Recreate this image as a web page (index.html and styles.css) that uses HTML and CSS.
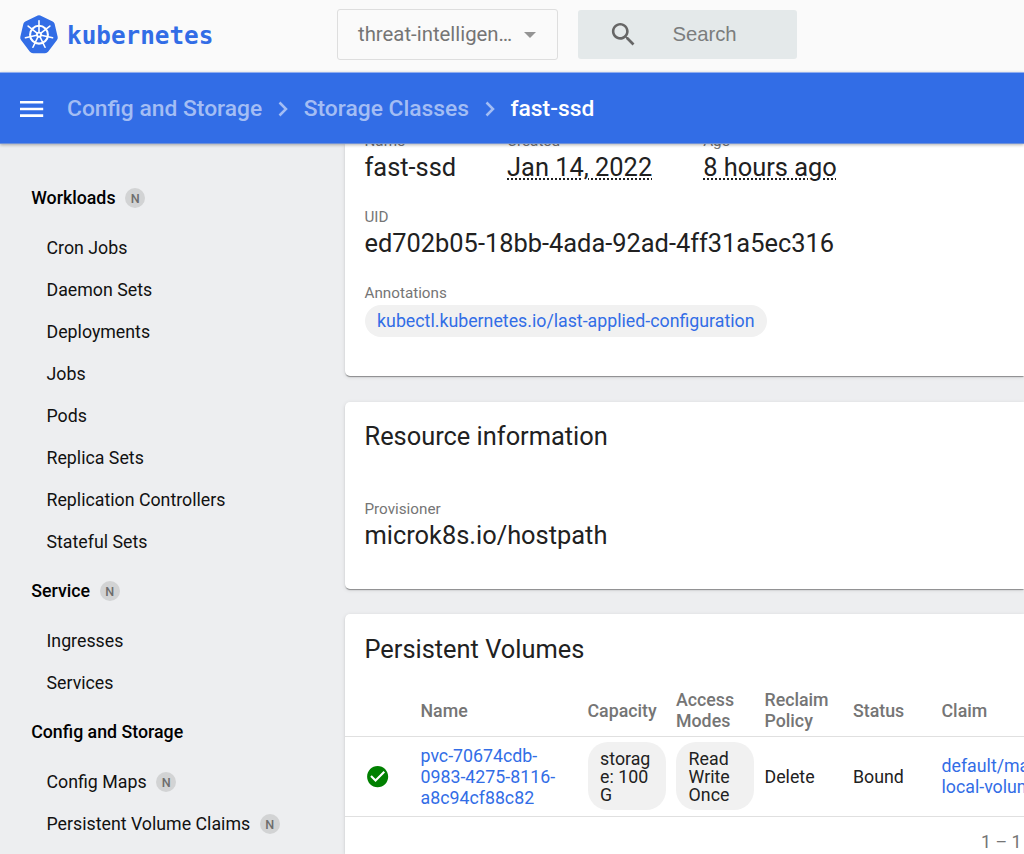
FILE: index.html
```
<!DOCTYPE html>
<html lang="en">
<head>
<meta charset="utf-8">
<title>Kubernetes Dashboard</title>
<link rel="stylesheet" href="styles.css">
</head>
<body>
<header class="top">
  <a class="brand">
    <svg class="logo" viewBox="0 0 38 39">
      <path fill="#326de6" d="M17.7.4Q19 0 20.3.4L32.7 6.4Q34.2 7.2 34.6 8.8L37.7 22Q38 23.700 37 25L28.300 36.600Q27 38.300 25 38.300H13Q11 38.300 9.700 36.600L1 25Q0 23.700.300 22L3.400 8.800Q3.800 7.200 5.300 6.400Z"/>
      <g fill="none" stroke="#fff">
        <circle cx="19" cy="19.700" r="8.900" stroke-width="2.100"/>
        <g stroke-width="1.600">
          <path id="spoke" d="M19 19.700V5.800" stroke-linecap="round"/>
          <use href="#spoke" transform="rotate(51.430 19 19.700)"/>
          <use href="#spoke" transform="rotate(102.860 19 19.700)"/>
          <use href="#spoke" transform="rotate(154.290 19 19.700)"/>
          <use href="#spoke" transform="rotate(205.710 19 19.700)"/>
          <use href="#spoke" transform="rotate(257.140 19 19.700)"/>
          <use href="#spoke" transform="rotate(308.570 19 19.700)"/>
        </g>
      </g>
      <circle cx="19" cy="19.700" r="3" fill="#fff"/>
      <circle cx="19" cy="19.700" r="1.100" fill="#326de6"/>
    </svg>
    <span class="wordmark">kubernetes</span>
  </a>
  <div class="namespace"><span>threat-intelligen…</span><i class="arrow"></i></div>
  <div class="search">
    <svg class="search-icon" viewBox="0 0 24 24"><path fill="#666" d="M15.500 14h-.790l-.280-.270C15.410 12.590 16 11.110 16 9.500 16 5.910 13.090 3 9.500 3S3 5.910 3 9.500 5.910 16 9.500 16c1.610 0 3.090-.590 4.230-1.570l.270.280v.790l5 4.990L20.490 19l-4.990-5zm-6 0C7.010 14 5 11.990 5 9.500S7.010 5 9.500 5 14 7.010 14 9.500 11.990 14 9.500 14z"/></svg>
    <span>Search</span>
  </div>
</header>
<div class="toolbar">
  <svg class="menu" viewBox="0 0 24 16"><path fill="#fff" d="M0 0h23.200v2.600H0zM0 6.700h23.200v2.600H0zM0 13.300h23.200v2.600H0z"/></svg>
  <nav class="crumbs">
    <a>Config and Storage</a>
    <svg class="chev" viewBox="0 0 10 16"><path d="M1.500 1.500L8 8l-6.500 6.500"/></svg>
    <a>Storage Classes</a>
    <svg class="chev" viewBox="0 0 10 16"><path d="M1.500 1.500L8 8l-6.500 6.500"/></svg>
    <b>fast-ssd</b>
  </nav>
</div>
<div class="layout">
  <aside class="side">
    <div class="group">Workloads<span class="badge">N</span></div>
    <div class="item">Cron Jobs</div>
    <div class="item">Daemon Sets</div>
    <div class="item">Deployments</div>
    <div class="item">Jobs</div>
    <div class="item">Pods</div>
    <div class="item">Replica Sets</div>
    <div class="item">Replication Controllers</div>
    <div class="item">Stateful Sets</div>
    <div class="group">Service<span class="badge">N</span></div>
    <div class="item">Ingresses</div>
    <div class="item">Services</div>
    <div class="group">Config and Storage</div>
    <div class="item">Config Maps<span class="badge">N</span></div>
    <div class="item">Persistent Volume Claims<span class="badge">N</span></div>
  </aside>
  <main class="content">
    <section class="card meta">
      <div class="props">
        <div class="prop"><label>Name</label><p>fast-ssd</p></div>
        <div class="prop"><label>Created</label><p><span class="dotted">Jan 14, 2022</span></p></div>
        <div class="prop"><label>Age</label><p><span class="dotted">8 hours ago</span></p></div>
      </div>
      <div class="prop"><label>UID</label><p>ed702b05-18bb-4ada-92ad-4ff31a5ec316</p></div>
      <div class="prop"><label>Annotations</label><a class="chip">kubectl.kubernetes.io/last-applied-configuration</a></div>
    </section>
    <section class="card resource">
      <h2>Resource information</h2>
      <div class="prop"><label>Provisioner</label><p>microk8s.io/hostpath</p></div>
    </section>
    <section class="card volumes">
      <h2>Persistent Volumes</h2>
      <div class="row head">
        <div></div><div>Name</div><div>Capacity</div><div>Access<br>Modes</div><div>Reclaim<br>Policy</div><div>Status</div><div>Claim</div>
      </div>
      <div class="row body">
        <div><svg class="ok" viewBox="0 0 24 24"><path fill="#008000" d="M12 2C6.480 2 2 6.480 2 12s4.480 10 10 10 10-4.480 10-10S17.520 2 12 2zm-2 15l-5-5 1.410-1.410L10 14.170l7.590-7.590L19 8l-9 9z"/></svg></div>
        <div class="link">pvc-70674cdb-<br>0983-4275-8116-<br>a8c94cf88c82</div>
        <div class="tag">storag<br>e: 100<br>G</div>
        <div class="tag">Read<br>Write<br>Once</div>
        <div>Delete</div>
        <div>Bound</div>
        <div class="link">default/ma<br>local-volum</div>
      </div>
      <div class="pager">1 – 1</div>
    </section>
  </main>
</div>
</body>
</html>
```
FILE: styles.css
```
* { box-sizing: border-box; }
html, body { margin: 0; height: 854px; overflow: hidden; }
body {
  display: flex;
  flex-direction: column;
  background: #edeef0;
  color: #212121;
  font: 17.78px/21px Roboto, sans-serif;
}
p, h2 { margin: 0; }
.top {
  height: 72px;
  flex: none;
  display: flex;
  align-items: flex-start;
  background: #fafafa;
}
.brand { display: flex; width: 337px; flex: none; padding: 15px 0 0 20px; }
.logo { width: 38px; height: 39px; flex: none; }
.wordmark {
  margin-left: 9px;
  padding-top: 1px;
  font: bold 24.3px/40px "DejaVu Sans Mono", monospace;
  color: #326de6;
}
.namespace {
  width: 221px;
  height: 51px;
  margin-top: 9px;
  padding: 0 21px 0 20px;
  flex: none;
  display: flex;
  align-items: center;
  justify-content: space-between;
  border: 1px solid #dedede;
  border-radius: 3px;
  color: #757575;
  font-size: 20.35px;
}
.arrow {
  border: 6.3px solid transparent;
  border-top-color: #949494;
  border-bottom: 0;
}
.search {
  width: 219px;
  height: 49px;
  margin: 10px 0 0 20px;
  padding-left: 30px;
  flex: none;
  display: flex;
  align-items: center;
  background: #e4e9ea;
  border-radius: 3px;
  color: #7b7d7d;
  font-family: "Liberation Sans", Arial, sans-serif;
  font-size: 20.3px;
}
.search-icon { width: 31px; height: 31px; margin: 0 33px 1px .4px; }
.toolbar {
  height: 72px;
  flex: none;
  position: relative;
  z-index: 1;
  display: flex;
  align-items: center;
  padding-left: 20px;
  background: #326de6;
  border-top: 1px solid #8fadef;
  border-bottom: 1px solid #6f91d8;
  box-shadow: 0 1px 3px rgba(0, 0, 0, .3);
}
.menu { width: 24px; height: 16px; margin: 1px 23px 0 0; }
.crumbs {
  display: flex;
  align-items: center;
  color: #a3bdf4;
  font-size: 22.82px;
  font-weight: 500;
}
.crumbs b { color: #fff; font-weight: 500; }
.chev { width: 10px; height: 16px; margin: 1px 15.2px 0 16.3px; fill: none; stroke: #a3bdf4; stroke-width: 2.5; }
.layout { flex: 1; min-height: 0; display: flex; overflow: hidden; }
.side { width: 344.5px; flex: none; padding-top: 25.9px; color: #111; }
.group, .item { display: flex; align-items: center; }
.group { height: 57.2px; padding-left: 31.2px; font-weight: 500; color: #000; }
.item { height: 42px; padding-left: 46.5px; }
.badge {
  width: 20px;
  height: 20px;
  margin: -1px 0 0 9.6px;
  border-radius: 50%;
  background: #d2d3d4;
  color: #6d6d6d;
  font-size: 12.6px;
  font-weight: 500;
  line-height: 21px;
  text-align: center;
}
.content { flex: 1; min-width: 0; display: flex; flex-direction: column; gap: 25.2px; }
.card {
  flex: none;
  padding: 0 0 0 20px;
  background: #fff;
  border-radius: 5px 0 0 5px;
  box-shadow: 0 2px 1px -1px rgba(0, 0, 0, .25), 0 1px 1px rgba(0, 0, 0, .16), 0 1px 4px rgba(0, 0, 0, .12);
}
.meta { height: 232.4px; border-radius: 0 0 0 5px; }
.props { display: flex; gap: 51px; margin-top: -13px; }
.prop { height: 76px; }
.prop label { display: block; color: #757575; font-size: 15.22px; line-height: 20px; }
.prop p { font-size: 25.4px; line-height: 33px; }
.dotted { text-decoration: underline dotted 2px; text-underline-offset: 2px; }
.chip {
  display: inline-block;
  height: 32px;
  margin-top: 2px;
  padding: 0 12.6px;
  border-radius: 16px;
  background: #f1f1f1;
  color: #326de6;
  line-height: 32px;
}
.resource { height: 187px; }
h2 { font-size: 25.4px; font-weight: 400; line-height: 30px; padding-top: 19.8px; }
.resource .prop { margin-top: 47.6px; }
.volumes { flex: 1; min-height: 0; padding: 0; border-radius: 5px 0 0 0; }
.volumes h2 { padding: 20.6px 0 0 20px; }
.row {
  display: grid;
  grid-template-columns: 56px 167px 88.5px 88.5px 88.5px 88.5px 1fr;
  align-items: center;
  padding-left: 20px;
  border-bottom: 1px solid #e0e0e0;
}
.head { height: 72.3px; padding-top: 22.5px; color: #757575; font-weight: 500; }
.body { height: 80px; padding-top: 1px; }
.body > div:not(.tag) { padding-top: 1.6px; }
.link { color: #326de6; white-space: nowrap; }
.tag {
  width: 78px;
  height: 68px;
  margin-top: -1px;
  padding: 9px 12.6px 0;
  border-radius: 20px;
  background: #f1f1f1;
  line-height: 17.7px;
  white-space: nowrap;
}
.body > div:first-child { padding-top: 0; }
.ok { display: block; width: 25.3px; height: 25.3px; }
.pager { padding: 15.6px 0 0 636.5px; color: #757575; }
```
